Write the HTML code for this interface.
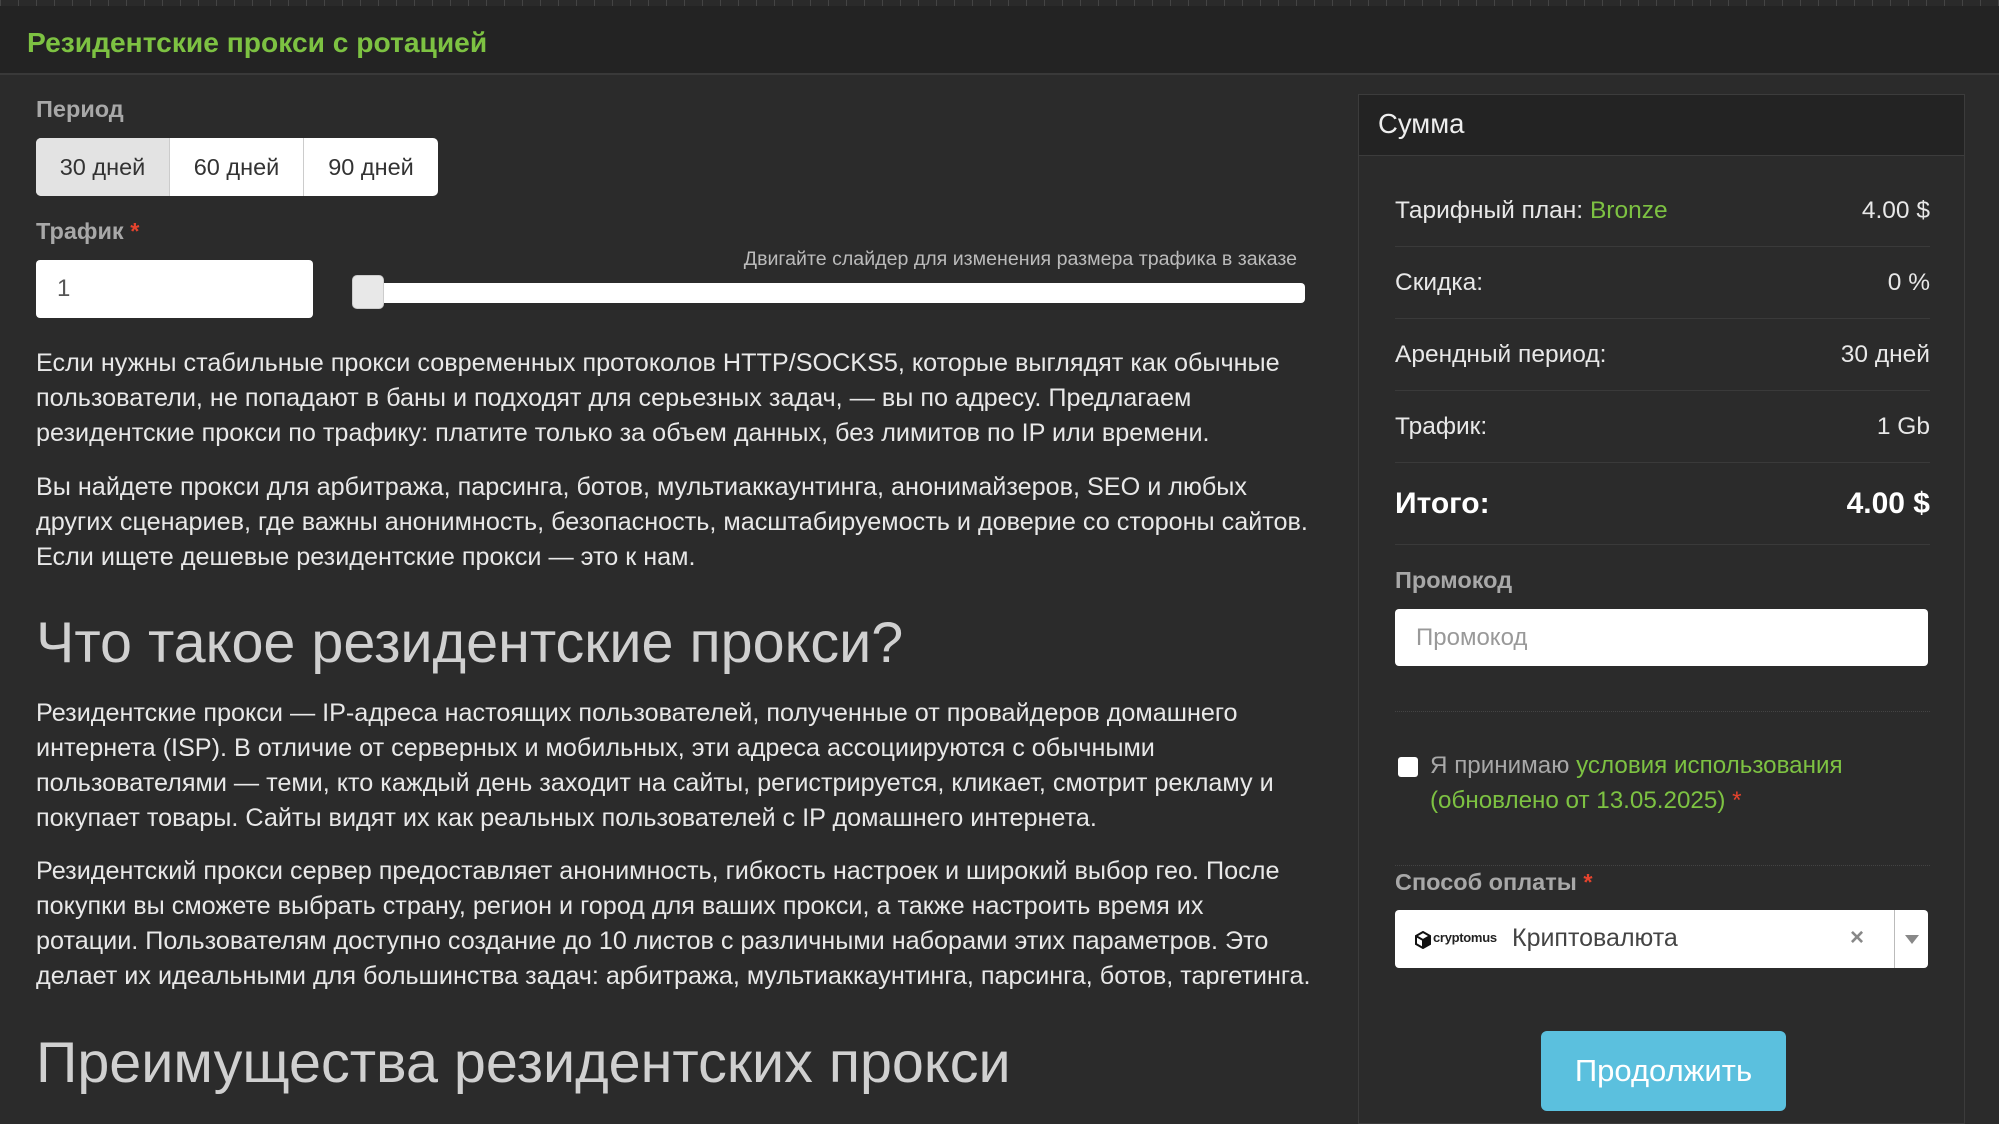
<!DOCTYPE html>
<html><head><meta charset="utf-8"><style>
*{box-sizing:border-box;margin:0;padding:0}
body{width:1999px;height:1120px;overflow:hidden;background:#2b2b2b;font-family:"Liberation Sans",sans-serif;color:#e6e6e6;position:relative}
.stripe{position:absolute;left:0;top:0;width:1999px;height:6px;background:repeating-linear-gradient(90deg,#444 0 1px,#2a2a2a 1px 18px)}
.hdr{position:absolute;left:0;top:6px;width:1999px;height:69px;background:#232323;border-bottom:2px solid #393939}
.hdr h1{position:absolute;left:27px;top:20px;font-size:28.2px;font-weight:bold;color:#7dc242}
.lbl{position:absolute;font-size:23.5px;font-weight:bold;color:#a8a8a8}
.req{color:#e5432d}
.grp{position:absolute;left:36px;top:138px;height:58px;display:flex;border-radius:5px;overflow:hidden;background:#fff}
.grp div{width:134px;height:58px;line-height:58px;text-align:center;font-size:23.5px;color:#333;border-right:1px solid #ccc}
.grp div:first-child{background:#e3e3e3}
.grp div:last-child{border:none}
.inp{position:absolute;background:#fff;border-radius:4px;font-size:24px;color:#555;padding-left:21px}
.p{position:absolute;left:36px;white-space:nowrap;font-size:25.2px;line-height:35px;color:#e8e8e8}
.h2{position:absolute;left:36px;font-size:57.5px;color:#d0d0d0}
.panel{position:absolute;left:1358px;top:94px;width:607px;height:1030px;border:1px solid #3c3c3c;background:#2b2b2b}
.ph{height:61px;background:#232323;font-size:27.5px;color:#eee;padding:13px 0 0 19px;border-bottom:1px solid #3c3c3c}
.row{position:absolute;left:36px;width:535px;font-size:24.5px;color:#e8e8e8;display:flex;justify-content:space-between;border-bottom:1px solid #3a3a3a;height:72px;align-items:center}
.sep{position:absolute;left:36px;width:535px;border-top:1px dotted #444}
</style></head><body>
<div class="stripe"></div>
<div class="hdr"><h1>Резидентские прокси с ротацией</h1></div>
<div class="lbl" style="left:36px;top:96px">Период</div>
<div class="grp"><div>30 дней</div><div>60 дней</div><div>90 дней</div></div>
<div class="lbl" style="left:36px;top:218px">Трафик <span class="req">*</span></div>
<div class="inp" style="left:36px;top:260px;width:277px;height:58px;line-height:58px">1</div>
<div style="position:absolute;right:702px;top:248px;font-size:19.6px;color:#bbb">Двигайте слайдер для изменения размера трафика в заказе</div>
<div style="position:absolute;left:352px;top:283px;width:953px;height:20px;background:#fff;border-radius:4px"></div>
<div style="position:absolute;left:352px;top:275px;width:32px;height:34px;background:#e8e8e8;border-radius:5px;border:1px solid #ccc"></div>
<div class="p" style="top:346px">Если нужны стабильные прокси современных протоколов HTTP/SOCKS5, которые выглядят как обычные<br>пользователи, не попадают в баны и подходят для серьезных задач, — вы по адресу. Предлагаем<br>резидентские прокси по трафику: платите только за объем данных, без лимитов по IP или времени.</div>
<div class="p" style="top:470px">Вы найдете прокси для арбитража, парсинга, ботов, мультиаккаунтинга, анонимайзеров, SEO и любых<br>других сценариев, где важны анонимность, безопасность, масштабируемость и доверие со стороны сайтов.<br>Если ищете дешевые резидентские прокси — это к нам.</div>
<div class="h2" style="top:610px">Что такое резидентские прокси?</div>
<div class="p" style="top:696px">Резидентские прокси — IP-адреса настоящих пользователей, полученные от провайдеров домашнего<br>интернета (ISP). В отличие от серверных и мобильных, эти адреса ассоциируются с обычными<br>пользователями — теми, кто каждый день заходит на сайты, регистрируется, кликает, смотрит рекламу и<br>покупает товары. Сайты видят их как реальных пользователей с IP домашнего интернета.</div>
<div class="p" style="top:854px">Резидентский прокси сервер предоставляет анонимность, гибкость настроек и широкий выбор гео. После<br>покупки вы сможете выбрать страну, регион и город для ваших прокси, а также настроить время их<br>ротации. Пользователям доступно создание до 10 листов с различными наборами этих параметров. Это<br>делает их идеальными для большинства задач: арбитража, мультиаккаунтинга, парсинга, ботов, таргетинга.</div>
<div class="h2" style="top:1030px">Преимущества резидентских прокси</div>

<div class="panel">
<div class="ph">Сумма</div>
<div class="row" style="top:80px"><span>Тарифный план: <span style="color:#7dc242">Bronze</span></span><span>4.00 $</span></div>
<div class="row" style="top:152px"><span>Скидка:</span><span>0 %</span></div>
<div class="row" style="top:224px"><span>Арендный период:</span><span>30 дней</span></div>
<div class="row" style="top:296px"><span>Трафик:</span><span>1 Gb</span></div>
<div class="row" style="top:368px;height:82px;font-size:30px;font-weight:bold;color:#fff"><span>Итого:</span><span>4.00 $</span></div>
<div class="lbl" style="left:36px;top:472px">Промокод</div>
<div class="inp" style="left:36px;top:514px;width:533px;height:57px;line-height:57px;color:#999">Промокод</div>
<div class="sep" style="top:616px"></div>
<div style="position:absolute;left:39px;top:662px;width:20px;height:20px;background:#fff;border-radius:3px"></div>
<div style="position:absolute;left:71px;top:653px;width:480px;font-size:24.2px;line-height:35px;color:#a8a8a8">Я принимаю <span style="color:#7dc242">условия использования (обновлено от 13.05.2025)</span> <span class="req">*</span></div>
<div class="sep" style="top:770px"></div>
<div class="lbl" style="left:36px;top:774px">Способ оплаты <span class="req">*</span></div>
<div style="position:absolute;left:36px;top:815px;width:533px;height:58px;background:#fff;border-radius:4px">
<svg style="position:absolute;left:20px;top:21px" width="16" height="18" viewBox="0 0 16 18"><path d="M8 1L15 5V13L8 17L1 13V5Z M1 5L8 9L15 5 M8 9V17" fill="none" stroke="#111" stroke-width="2"/><path d="M8 9L15 5V13L8 17Z" fill="#111"/></svg>
<span style="position:absolute;left:38px;top:20px;font-size:13px;font-weight:bold;color:#222;letter-spacing:-0.3px">cryptomus</span>
<span style="position:absolute;left:117px;top:14px;font-size:25px;color:#444">Криптовалюта</span>
<span style="position:absolute;left:455px;top:14px;font-size:24px;color:#888;font-weight:bold">×</span>
<div style="position:absolute;left:499px;top:0;height:58px;border-left:1px solid #bbb"></div>
<div style="position:absolute;left:510px;top:25px;border-left:7px solid transparent;border-right:7px solid transparent;border-top:9px solid #888"></div>
</div>
<div style="position:absolute;left:182px;top:936px;width:245px;height:80px;background:#5bc0de;border-radius:6px;color:#fff;font-size:31px;text-align:center;line-height:80px">Продолжить</div>
</div>
</body></html>
